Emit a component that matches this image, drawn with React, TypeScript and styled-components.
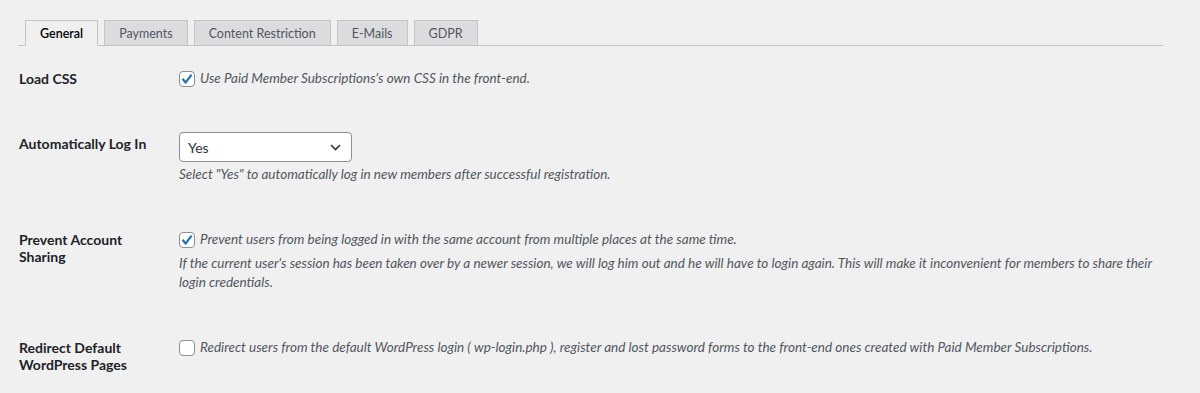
import React from 'react';
import styled, { createGlobalStyle } from 'styled-components';

const GlobalStyle = createGlobalStyle`
  html, body {
    margin: 0;
    padding: 0;
    background: #f0f0f1;
  }
  body {
    font-family: Lato, "Liberation Sans", sans-serif;
    font-size: 13.5px;
    color: #1d2327;
  }
`;

const Page = styled.div`
  padding: 20px 37px 0 18px;
`;

const TabBar = styled.nav`
  display: flex;
  gap: 6px;
  padding-left: 7px;
  border-bottom: 1px solid #c3c4c7;
`;

const Tab = styled.a<{ $active?: boolean }>`
  display: flex;
  align-items: center;
  height: 24px;
  padding: 0 14px;
  margin-bottom: -1px;
  border: 1px solid #c3c4c7;
  border-bottom-color: ${(p) => (p.$active ? '#f0f0f1' : '#c3c4c7')};
  background: ${(p) => (p.$active ? '#f0f0f1' : '#dcdcde')};
  color: ${(p) => (p.$active ? '#000' : '#50575e')};
  font-size: 12.5px;
  font-weight: ${(p) => (p.$active ? 600 : 400)};
  text-decoration: none;
  white-space: nowrap;
`;

const Row = styled.div`
  display: grid;
  grid-template-columns: 160px 1fr;
  padding: 23px 0 23px 1px;
`;

const Label = styled.div`
  width: 140px;
  padding-top: 1px;
  font-size: 14px;
  font-weight: 700;
  line-height: 17px;
  color: #1d2327;
`;

const Field = styled.div`
  display: flex;
  flex-direction: column;
`;

const CheckLine = styled.label`
  display: flex;
  align-items: center;
  gap: 5px;
  line-height: 19px;
  font-style: italic;
  color: #50575e;
`;

const Box = styled.span`
  flex: none;
  width: 14px;
  height: 14px;
  border: 1px solid #8c8f94;
  border-radius: 4px;
  background: #fff;
  display: flex;
  align-items: center;
  justify-content: center;
`;

const Description = styled.p<{ $top?: number }>`
  margin: ${(p) => p.$top ?? 5}px 0 0;
  line-height: 19px;
  font-style: italic;
  color: #50575e;
`;

const SelectWrap = styled.div`
  display: flex;
  margin-top: -2px;
`;

const Select = styled.div`
  width: 173px;
  height: 30px;
  box-sizing: border-box;
  border: 1px solid #8c8f94;
  border-radius: 4px;
  background: #fff;
  display: flex;
  align-items: center;
  justify-content: space-between;
  padding: 1px 10px 0 8px;
  font-size: 14px;
  color: #2c3338;
`;

function Checkbox({ checked }: { checked?: boolean }) {
  return (
    <Box>
      {checked && (
        <svg width="14" height="14" viewBox="0 0 14 14">
          <path d="M2.6 6.8 L5.6 10.6 L11.6 2.6" fill="none" stroke="#2271b1" strokeWidth="2.2" strokeLinejoin="round" />
        </svg>
      )}
    </Box>
  );
}

export default function App() {
  const tabs = ['General', 'Payments', 'Content Restriction', 'E-Mails', 'GDPR'];
  return (
    <Page>
      <GlobalStyle />
      <TabBar>
        {tabs.map((t, i) => (
          <Tab key={t} $active={i === 0}>
            {t}
          </Tab>
        ))}
      </TabBar>

      <Row>
        <Label>Load CSS</Label>
        <Field>
          <CheckLine>
            <Checkbox checked />
            Use Paid Member Subscriptions's own CSS in the front-end.
          </CheckLine>
        </Field>
      </Row>

      <Row>
        <Label>Automatically Log In</Label>
        <Field>
          <SelectWrap>
            <Select>
              <span>Yes</span>
              <svg width="11" height="7" viewBox="0 0 11 7">
                <path d="M1 1 L5.5 5.5 L10 1" fill="none" stroke="#2c3338" strokeWidth="1.6" />
              </svg>
            </Select>
          </SelectWrap>
          <Description $top={3}>
            Select "Yes" to automatically log in new members after successful registration.
          </Description>
        </Field>
      </Row>

      <Row>
        <Label>Prevent Account Sharing</Label>
        <Field>
          <CheckLine>
            <Checkbox checked />
            Prevent users from being logged in with the same account from multiple places at the same time.
          </CheckLine>
          <Description>
            If the current user's session has been taken over by a newer session, we will log him out and he will
            have to login again. This will make it inconvenient for members to share their login credentials.
          </Description>
        </Field>
      </Row>

      <Row>
        <Label>Redirect Default WordPress Pages</Label>
        <Field>
          <CheckLine>
            <Checkbox />
            Redirect users from the default WordPress login ( wp-login.php ), register and lost password forms to the
            front-end ones created with Paid Member Subscriptions.
          </CheckLine>
        </Field>
      </Row>
    </Page>
  );
}
